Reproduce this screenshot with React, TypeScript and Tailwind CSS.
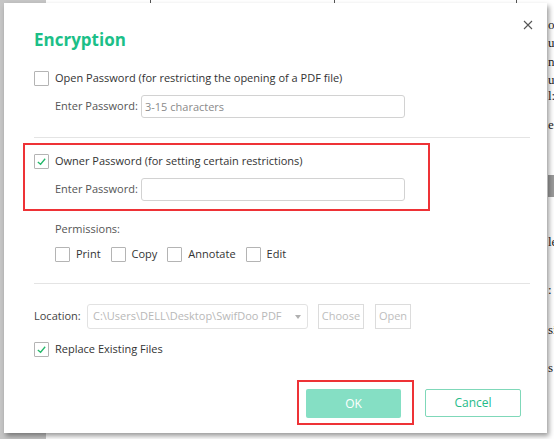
import React from 'react';

// ============================================================================
// Sub-Components
// ============================================================================

interface CheckboxProps {
  checked?: boolean;
}

function Checkbox({ checked = false }: CheckboxProps): React.ReactElement {
  return (
    <span className="flex h-[15px] w-[15px] shrink-0 items-center justify-center rounded-[1px] border border-[#b4b4b4] bg-white">
      {checked && (
        <svg width="11" height="11" viewBox="0 0 12 12" fill="none">
          <polyline points="2 6.5 5 9 10 3" stroke="#23b86a" strokeWidth="1.4" />
        </svg>
      )}
    </span>
  );
}

function PasswordRow({ placeholder = '' }: { placeholder?: string }): React.ReactElement {
  return (
    <div className="flex h-[23px] items-center pl-[21px]">
      <span className="w-[86px] shrink-0 whitespace-nowrap text-[#555]">Enter Password:</span>
      <input
        readOnly
        placeholder={placeholder}
        className="h-[23px] w-[264px] rounded-[3px] border border-[#d2d2d2] px-[3px] text-[#333] outline-none placeholder:text-[#8a8a8a]"
      />
    </div>
  );
}

const PERMISSIONS = ['Print', 'Copy', 'Annotate', 'Edit'];

const SIDE_TEXT = [
  { top: 'top-[18px]', text: 'o' },
  { top: 'top-[36px]', text: 'ul' },
  { top: 'top-[55px]', text: 'n' },
  { top: 'top-[73px]', text: 'u' },
  { top: 'top-[89px]', text: 'l:' },
  { top: 'top-[118px]', text: 'es' },
  { top: 'top-[235px]', text: 'le' },
  { top: 'top-[283px]', text: ':' },
  { top: 'top-[323px]', text: 'si' },
  { top: 'top-[361px]', text: 's' },
];

// ============================================================================
// Main Component
// ============================================================================

export default function App(): React.ReactElement {
  return (
    <div
      className="relative flex h-[439px] w-[554px] overflow-hidden bg-white text-[11px] text-[#333]"
      style={{ fontFamily: '"Open Sans", "Noto Sans", sans-serif' }}
    >
      {/* Background document */}
      <div className="h-full w-[46px] bg-[#c6c6c6]" />
      <div className="relative flex-1 bg-white">
        <div className="absolute left-[104px] top-0 h-[4px] w-px bg-[#555]" />
        <div className="absolute left-[288px] top-0 h-[4px] w-px bg-[#555]" />
        <div className="absolute left-[470px] top-0 h-[4px] w-px bg-[#555]" />
        <div className="absolute left-[502px] top-0 h-full w-[6px] overflow-hidden">
          {SIDE_TEXT.map((item) => (
            <span
              key={item.top}
              className={`absolute left-0 ${item.top} text-[13px] leading-[14px] text-[#222]`}
              style={{ fontFamily: '"Liberation Serif", serif' }}
            >
              {item.text}
            </span>
          ))}
          <div className="absolute left-0 top-[175px] h-[22px] w-[8px] bg-[#9a9a9a]" />
        </div>
      </div>

      {/* Dialog */}
      <div className="absolute left-[4px] top-[3px] flex h-[430px] w-[543px] flex-col bg-white pl-[30px] pr-[17px] shadow-[2px_3px_5px_rgba(0,0,0,0.4)]">
        <button className="absolute right-[13px] top-[16px] p-[1px] text-[#555]" aria-label="Close">
          <svg width="10" height="10" viewBox="0 0 10 10" fill="none" stroke="currentColor" strokeWidth="1.1">
            <path d="M1 1l8 8M9 1L1 9" />
          </svg>
        </button>

        {/* Title */}
        <h3 className="mt-[25px] h-[24px] text-[17px] font-bold leading-[24px] text-[#1cbf88]">Encryption</h3>

        {/* Open password */}
        <label className="mt-[18px] flex h-[16px] items-center gap-[6px]">
          <Checkbox />
          <span className="whitespace-nowrap">Open Password (for restricting the opening of a PDF file)</span>
        </label>
        <div className="mt-[9px]">
          <PasswordRow placeholder="3-15 characters" />
        </div>

        <div className="mt-[19px] h-px bg-[#e4e4e4]" />

        {/* Owner password (highlighted) */}
        <div className="ml-[-11px] mt-[5px] flex h-[68px] w-[407px] flex-col border-2 border-[#ee3236] pl-[9px] pt-[8px]">
          <label className="flex h-[16px] items-center gap-[6px]">
            <Checkbox checked />
            <span className="whitespace-nowrap">Owner Password (for setting certain restrictions)</span>
          </label>
          <div className="mt-[9px]">
            <PasswordRow />
          </div>
        </div>

        {/* Permissions */}
        <div className="mt-[10px] flex h-[16px] items-center pl-[21px] text-[#555]">Permissions:</div>
        <div className="mt-[9px] flex h-[16px] items-center gap-[10px] pl-[21px]">
          {PERMISSIONS.map((name) => (
            <label key={name} className="flex items-center gap-[6px]">
              <Checkbox />
              <span>{name}</span>
            </label>
          ))}
        </div>

        <div className="mt-[21px] h-px bg-[#e4e4e4]" />

        {/* Location */}
        <div className="mt-[20px] flex h-[25px] items-center">
          <span className="w-[53px] shrink-0 text-[#444]">Location:</span>
          <div className="flex h-[25px] w-[221px] shrink-0 items-center justify-between rounded-[3px] border border-[#e2e2e2] pl-[5px] pr-[6px] text-[#b8b8b8]">
            <span className="whitespace-nowrap">C:\Users\DELL\Desktop\SwifDoo PDF</span>
            <svg width="6" height="4" viewBox="0 0 6 4">
              <path d="M0 0h6L3 4z" fill="#b0b0b0" />
            </svg>
          </div>
          <button className="ml-[10px] h-[25px] w-[46px] shrink-0 border border-[#dcdcdc] text-[#bdbdbd]">Choose</button>
          <button className="ml-[11px] h-[25px] w-[36px] shrink-0 border border-[#dcdcdc] text-[#bdbdbd]">Open</button>
        </div>

        <label className="mt-[12px] flex h-[16px] items-center gap-[6px]">
          <Checkbox checked />
          <span className="whitespace-nowrap">Replace Existing Files</span>
        </label>

        {/* Actions */}
        <div className="mt-[23px] flex items-start justify-end pr-[9px]">
          <div className="h-[45px] w-[117px] border-2 border-[#ee3236] pl-[7px] pt-[7px]">
            <button className="h-[29px] w-[95px] rounded-[2px] bg-[#85dfc4] text-[12px] text-white">OK</button>
          </div>
          <button className="ml-[11px] mt-[9px] h-[28px] w-[96px] rounded-[2px] border border-[#7fd8b9] text-[12px] text-[#25bb88]">
            Cancel
          </button>
        </div>
      </div>
    </div>
  );
}
